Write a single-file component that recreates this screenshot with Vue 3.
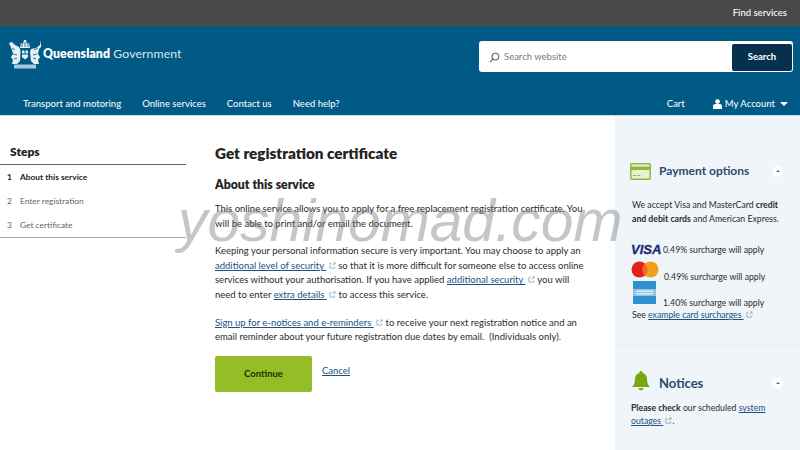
<script setup>
const nav = ['Transport and motoring', 'Online services', 'Contact us', 'Need help?']
const steps = [
  { n: 1, label: 'About this service', active: true },
  { n: 2, label: 'Enter registration' },
  { n: 3, label: 'Get certificate' }
]
</script>

<template>
  <div class="page">
    <div class="topbar"><span>Find services</span></div>
    <header class="header">
      <div class="brand-row">
        <div class="brand">
          <svg class="crest" viewBox="0 0 32 30" width="32" height="30">
            <path fill="#e6f1f6" d="M11 9l1-5 2 1 1-4h2l1 4 2-1 1 5z" />
            <path fill="#e6f1f6" d="M0 4l3-1 3 3 4 2 2 4-1 10-3 3H3l1-4-2-3 2-3-1-4z" />
            <path fill="#e6f1f6" d="M32 1l-1 5-4 3-5 1-1 3 1 9 3 3h5l-1-4 2-3-2-3 1-5 2-2z" />
            <path fill="#005a85" d="M11.500 10h9v8l-4.500 4-4.500-4z" />
            <path fill="#e6f1f6" d="M13 11.500h2.500v3H13zM16.500 11.500H19v3h-2.500zM13 15.500h6V18l-3 2.500-3-2.500z" />
            <path stroke="#005a85" stroke-width="0.8" fill="none" d="M3 9l3 2M4 15l4 1M5 20l3-1M29 9l-4 2M28 15l-4 1M27 20l-3-1M13 5v3M16 3v5M19 5v3" />
            <rect x="5" y="25.500" width="22" height="4" fill="#a8c9da" />
          </svg>
          <span class="wordmark"><b>Queensland</b> Government</span>
        </div>
        <div class="search">
          <svg class="lens" viewBox="0 0 12 12" width="11" height="11">
            <circle cx="7" cy="5" r="3.700" fill="none" stroke="#666" stroke-width="1.200" />
            <path d="M4.300 7.700L1 11" stroke="#666" stroke-width="1.300" />
          </svg>
          <span class="placeholder">Search website</span>
          <span class="search-btn">Search</span>
        </div>
      </div>
      <nav class="nav">
        <a v-for="item in nav" :key="item">{{ item }}</a>
        <a class="cart">Cart</a>
        <a class="account">
          <svg viewBox="0 0 10 11" width="9" height="10">
            <circle cx="5" cy="2.800" r="2.600" fill="#fff" />
            <path d="M0 11V8q0-2.500 2.500-2.500h5Q10 5.500 10 8v3z" fill="#fff" />
          </svg>
          My Account
          <i class="caret"></i>
        </a>
      </nav>
    </header>

    <div class="body">
      <aside class="steps">
        <h2>Steps</h2>
        <ol>
          <li v-for="s in steps" :key="s.n" :class="{ active: s.active }">
            <span class="num">{{ s.n }}</span>{{ s.label }}
          </li>
        </ol>
      </aside>

      <main class="content">
        <h1>Get registration certificate</h1>
        <h3>About this service</h3>
        <p>This online service allows you to apply for a free replacement registration certificate. You will be able to print and/or email the document.</p>
        <p>Keeping your personal information secure is very important. You may choose to apply an
          <a>additional level of security&nbsp;</a> <svg class="ext" viewBox="0 0 8 8"><path d="M3 1.500H1v5.500h5.500V5M4 4l3-3M5 1h2v2" /></svg> so that it is more difficult for someone else to access online services without your authorisation. If you have applied
          <a>additional security&nbsp;</a> <svg class="ext" viewBox="0 0 8 8"><path d="M3 1.500H1v5.500h5.500V5M4 4l3-3M5 1h2v2" /></svg> you will need to enter
          <a>extra details&nbsp;</a> <svg class="ext" viewBox="0 0 8 8"><path d="M3 1.500H1v5.500h5.500V5M4 4l3-3M5 1h2v2" /></svg> to access this service.</p>
        <p><a>Sign up for e-notices and e-reminders&nbsp;</a> <svg class="ext" viewBox="0 0 8 8"><path d="M3 1.500H1v5.500h5.500V5M4 4l3-3M5 1h2v2" /></svg> to receive your next registration notice and an email reminder about your future registration due dates by email.&nbsp; (Individuals only).</p>
        <div class="actions">
          <span class="continue">Continue</span>
          <a class="cancel">Cancel</a>
        </div>
      </main>

      <aside class="side">
        <section class="panel payment">
          <div class="panel-head">
            <svg viewBox="0 0 21 17" width="21" height="17">
              <rect x="0.750" y="0.750" width="19.500" height="15.500" rx="1.500" fill="#e6f1d5" stroke="#8cbb3c" stroke-width="1.500" />
              <rect x="1" y="3.500" width="19" height="3.500" fill="#8cbb3c" />
              <path d="M3 12.500h3M7.500 12.500h3" stroke="#8cbb3c" stroke-width="1" />
            </svg>
            <h4>Payment options</h4>
            <span class="toggle"></span>
          </div>
          <p class="intro">We accept Visa and MasterCard <b>credit and debit cards</b> and American Express.</p>
          <div class="card-row visa-row"><span class="visa">VISA</span><span>0.49% surcharge will apply</span></div>
          <div class="card-row mc-row">
            <svg viewBox="0 0 28 17" width="28" height="17">
              <circle cx="8.500" cy="8.500" r="8" fill="#e2231a" />
              <circle cx="19.500" cy="8.500" r="8" fill="#f59e1d" />
              <path d="M14 2.700a8 8 0 0 1 0 11.600a8 8 0 0 1 0-11.600z" fill="#f26a21" />
            </svg>
            <span>0.49% surcharge will apply</span>
          </div>
          <div class="card-row amex-row">
            <svg viewBox="0 0 23 23" width="23" height="23">
              <rect width="23" height="23" fill="#2f8fcf" />
              <rect y="8" width="23" height="7" fill="#8fc4e4" />
              <rect x="3" y="9.500" width="17" height="1.500" fill="#dcecf6" />
              <rect x="3" y="12" width="17" height="1.500" fill="#dcecf6" />
            </svg>
            <span>1.40% surcharge will apply</span>
          </div>
          <p class="see">See <a>example card surcharges&nbsp;</a> <svg class="ext" viewBox="0 0 8 8"><path d="M3 1.500H1v5.500h5.500V5M4 4l3-3M5 1h2v2" /></svg></p>
        </section>
        <section class="panel notices">
          <div class="panel-head">
            <svg viewBox="0 0 18 20" width="18" height="20">
              <path fill="#76a90f" d="M9 0a1.500 1.500 0 0 1 1.500 2Q15 3 15 8q0 5 3 8H0q3-3 3-8 0-5 4.500-6A1.500 1.500 0 0 1 9 0zM6.500 17h5a2.500 2.500 0 0 1-5 0z" />
            </svg>
            <h4>Notices</h4>
            <span class="toggle"></span>
          </div>
          <p class="note"><b>Please check</b> our scheduled <a>system outages&nbsp;</a> <svg class="ext" viewBox="0 0 8 8"><path d="M3 1.500H1v5.500h5.500V5M4 4l3-3M5 1h2v2" /></svg>.</p>
        </section>
      </aside>
    </div>

    <div class="watermark">yoshinomad.com</div>
  </div>
</template>

<style>
html, body { margin: 0; padding: 0; background: #fff; overflow: hidden; }
</style>

<style scoped>
.page {
  position: relative;
  width: 800px;
  height: 450px;
  overflow: hidden;
  font-family: Lato, "Open Sans", sans-serif;
  color: #2b2b2b;
  font-size: 9.500px;
  line-height: 14.600px;
  display: flex;
  flex-direction: column;
}
.topbar {
  height: 26px;
  flex: none;
  background: #4a4a4a;
  color: #fff;
  display: flex;
  align-items: center;
  justify-content: flex-end;
  padding-right: 13px;
  font-weight: 500;
}
.header {
  height: 90px;
  flex: none;
  background: #005a85;
  color: #fff;
  display: flex;
  flex-direction: column;
  border-bottom: 1px solid #bfe0ea;
  box-sizing: border-box;
}
.brand-row {
  height: 64px;
  flex: none;
  display: flex;
  align-items: flex-start;
  justify-content: space-between;
  padding: 13px 7px 0 9px;
  box-sizing: border-box;
}
.brand { display: flex; align-items: center; gap: 2px; }
.crest { display: block; }
.wordmark { font-size: 12.250px; color: #d8e8f0; letter-spacing: 0.1px; padding-top: 1px; }
.wordmark b { color: #fff; font-weight: 800; }
.search {
  width: 314px;
  height: 31px;
  margin-top: 2px;
  background: #fff;
  border-radius: 3px;
  display: flex;
  align-items: center;
  box-sizing: border-box;
  padding: 2px 1px 1px 10px;
}
.lens { flex: none; margin-right: 4px; }
.placeholder { flex: 1; color: #7c7c7c; }
.search-btn {
  width: 60px;
  height: 27px;
  background: #07304f;
  border-radius: 2px;
  color: #fff;
  font-weight: 700;
  display: flex;
  align-items: center;
  justify-content: center;
}
.nav {
  flex: 1;
  display: flex;
  align-items: center;
  padding: 3px 12px 0 23px;
  gap: 21px;
  font-weight: 500;
  color: #f2f8fb;
}
.cart { margin-left: auto; margin-right: 7px; }
.account { display: flex; align-items: center; gap: 3px; }
.caret {
  width: 0;
  height: 0;
  margin-left: 2px;
  border: 4px solid transparent;
  border-top: 4px solid #fff;
  border-bottom: 0;
}
.body { flex: 1; display: flex; min-height: 0; }
.steps { width: 186px; flex: none; padding-top: 28px; box-sizing: border-box; }
.steps h2 {
  margin: 0;
  padding: 0 0 4px 10px;
  font-size: 12px;
  line-height: 16px;
  font-weight: 800;
  color: #1e1e1e;
  border-bottom: 1px solid #666;
}
.steps ol { list-style: none; margin: 0; padding: 0; border-bottom: 1px solid #aaa; }
.steps li {
  height: 24px;
  display: flex;
  align-items: center;
  font-size: 8.400px;
  color: #666;
  padding-left: 7px;
}
.steps li.active { color: #222; font-weight: 700; }
.num { width: 13px; }
.content { width: 370px; margin-left: 29px; flex: none; padding-top: 27px; }
h1 {
  margin: 0;
  font-size: 15.250px;
  line-height: 20px;
  font-weight: 800;
  color: #232323;
}
h3 {
  margin: 13px 0 0;
  font-size: 12.250px;
  line-height: 18px;
  font-weight: 800;
  color: #232323;
}
.content p { margin: 8px 0 0; width: 370px; }
.content p + p { margin-top: 13px; }
a { color: #20527f; text-decoration: underline; }
.nav a { color: inherit; text-decoration: none; }
.ext {
  width: 7px;
  height: 7px;
  fill: none;
  stroke: #7d93a8;
  stroke-width: 0.8;
  vertical-align: 0;
}
.actions { display: flex; align-items: flex-start; gap: 10px; margin-top: 11px; }
.continue {
  width: 97px;
  height: 36px;
  box-sizing: border-box;
  padding-top: 1px;
  background: #95bd27;
  border-radius: 2px;
  color: #203000;
  font-weight: 700;
  display: flex;
  align-items: center;
  justify-content: center;
}
.cancel { margin-top: 8px; }
.side {
  width: 185px;
  margin-left: auto;
  flex: none;
  background: #eff5f9;
  font-size: 8.700px;
  line-height: 14px;
}
.panel { padding: 0 15px 0 17px; box-sizing: border-box; }
.payment { height: 230px; padding-top: 45px; border-bottom: 1px solid #e6edf2; }
.notices { padding-top: 27px; }
.panel-head { display: flex; align-items: center; gap: 9px; height: 20px; }
.panel-head svg { display: block; flex: none; }
.payment .panel-head { gap: 8px; }
.payment .panel-head svg { margin-left: -2px; }
.notices .panel-head svg { margin-top: -4px; }
.panel-head h4 {
  margin: 0;
  flex: 1;
  font-size: 12px;
  line-height: 20px;
  font-weight: 700;
  color: #2c4a6e;
}
.notices .panel-head h4 { font-size: 13px; }
.toggle {
  position: relative;
  width: 11px;
  height: 11px;
  background: #fff;
  border-radius: 50%;
  margin-right: 2px;
}
.toggle::after {
  content: "";
  position: absolute;
  left: 3.500px;
  top: 4px;
  border: 2px solid transparent;
  border-top: 0;
  border-bottom: 2px solid #667;
}
.intro { margin: 17px 0 0; }
.card-row { display: flex; margin-left: -1px; }
.visa-row { margin-top: 15px; height: 17px; align-items: center; gap: 4px; }
.visa {
  font-family: "Liberation Sans", sans-serif;
  font-size: 13px;
  font-weight: 700;
  font-style: italic;
  color: #1a2a78;
  -webkit-text-stroke: 0.3px #1a2a78;
  width: 28px;
}
.mc-row { margin-top: 3px; height: 17px; gap: 5px; align-items: flex-end; line-height: 9px; }
.mc-row span { margin-bottom: -3px; }
.amex-row { margin-top: 3px; height: 23px; margin-left: 1px; gap: 7px; align-items: flex-end; line-height: 11px; }
.amex-row span { margin-bottom: -4px; }
.see { margin: 4px 0 0; }
.note { margin: 8px 0 0; margin-left: -1px; line-height: 13px; }
.watermark {
  position: absolute;
  left: 178px;
  top: 186px;
  font-family: "Liberation Sans", sans-serif;
  font-style: italic;
  font-size: 58.800px;
  line-height: 70px;
  color: rgba(120, 120, 120, 0.42);
  pointer-events: none;
  white-space: nowrap;
}
</style>
